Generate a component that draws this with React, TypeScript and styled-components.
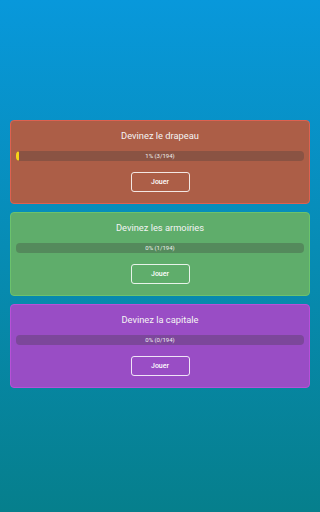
import React from 'react'
import styled, { createGlobalStyle } from 'styled-components'

const GlobalStyle = createGlobalStyle`
  html, body {
    margin: 0;
    padding: 0;
    height: 100%;
  }
  body {
    font-family: Roboto, 'Liberation Sans', sans-serif;
  }
`

const Page = styled.div`
  height: 512px;
  box-sizing: border-box;
  padding: 0 10px 4px;
  display: flex;
  flex-direction: column;
  justify-content: center;
  gap: 8px;
  background: linear-gradient(180deg, #0898db 0%, #067f8c 100%);
`

const Card = styled.div<{ $bg: string; $border: string }>`
  height: 84px;
  box-sizing: border-box;
  padding: 7px 5px 0;
  display: flex;
  flex-direction: column;
  align-items: center;
  background: ${(p) => p.$bg};
  border: 1px solid ${(p) => p.$border};
  border-radius: 4px;
`

const Title = styled.div`
  color: #f4f4f4;
  font-size: 9.3px;
  line-height: 16px;
  margin-bottom: 7px;
`

const Track = styled.div`
  position: relative;
  align-self: stretch;
  height: 10px;
  border-radius: 4px;
  background: rgba(60, 60, 60, 0.3);
  overflow: hidden;
  display: flex;
  align-items: center;
  justify-content: center;
`

const Fill = styled.div`
  position: absolute;
  left: 0;
  top: 0;
  bottom: 0;
  background: #f7d417;
  border-radius: 4px;
`

const TrackLabel = styled.span`
  position: relative;
  color: #f0f0f0;
  font-size: 6px;
  line-height: 10px;
`

const PlayButton = styled.button`
  margin-top: 11px;
  width: 59px;
  height: 20px;
  box-sizing: border-box;
  background: transparent;
  border: 1px solid rgba(255, 255, 255, 0.85);
  border-radius: 3px;
  color: #fff;
  font-family: Roboto, 'Liberation Sans', sans-serif;
  font-size: 7px;
  font-weight: 500;
  padding: 0;
  cursor: pointer;
`

const games = [
  { title: 'Devinez le drapeau', done: 3, pct: 1, bg: '#ac5e47', border: '#dd6150' },
  { title: 'Devinez les armoiries', done: 1, pct: 0, bg: '#5fad6b', border: '#6cc26d' },
  { title: 'Devinez la capitale', done: 0, pct: 0, bg: '#994dc5', border: '#b850d8' },
]

const TOTAL = 194

const App = () => (
  <>
    <GlobalStyle />
    <Page>
      {games.map((g) => (
        <Card key={g.title} $bg={g.bg} $border={g.border}>
          <Title>{g.title}</Title>
          <Track>
            {g.pct > 0 && <Fill style={{ width: `${Math.max(g.pct, 1)}%` }} />}
            <TrackLabel>
              {g.pct}% ({g.done}/{TOTAL})
            </TrackLabel>
          </Track>
          <PlayButton>Jouer</PlayButton>
        </Card>
      ))}
    </Page>
  </>
)

export default App
